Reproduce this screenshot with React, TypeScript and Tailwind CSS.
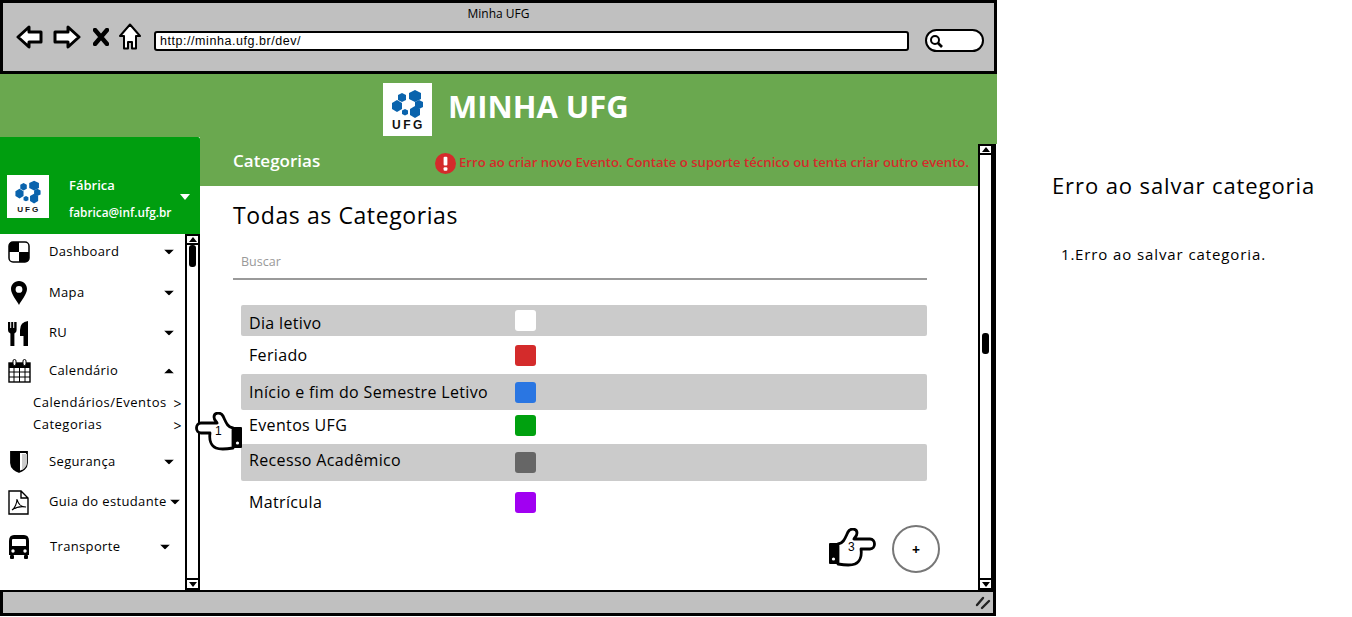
import type { ReactNode } from "react";

const FONT = "font-['Open_Sans','Noto_Sans',sans-serif]";

const CATEGORIES = [
  { name: "Dia letivo", color: "bg-white", gray: true, row: "h-[31px]", text: "pt-[8px]", swatch: "mt-[5px]" },
  { name: "Feriado", color: "bg-[#d42b2b]", gray: false, row: "h-[38px]", text: "pt-[9px]", swatch: "mt-[9px]" },
  { name: "Início e fim do Semestre Letivo", color: "bg-[#2a76e2]", gray: true, row: "h-[36px]", text: "pt-[8px]", swatch: "mt-[8px]" },
  { name: "Eventos UFG", color: "bg-[#00a10f]", gray: false, row: "h-[34px]", text: "pt-[5px]", swatch: "mt-[5px]" },
  { name: "Recesso Acadêmico", color: "bg-[#666666]", gray: true, row: "h-[37px]", text: "pt-[6px]", swatch: "mt-[8px]" },
  { name: "Matrícula", color: "bg-[#a100f2]", gray: false, row: "h-[43px]", text: "pt-[11px]", swatch: "mt-[11px]" },
];

function Logo({ className, textSize }: { className: string; textSize: number }) {
  return (
    <div className={`bg-white shrink-0 ${className}`}>
      <svg viewBox="0 0 49 53" className="w-full h-full">
        <g fill="#0a63ad">
          <polygon points="32,7 38,10 38,16 32,19 26,16 26,10" />
          <polygon points="19,10 23,12 23,17 19,19 15,17 15,12" />
          <polygon points="14,17 19,20 19,26 14,29 9,26 9,20" />
          <polygon points="36,17 40,19 40,24 36,26 32,24 32,19" />
          <polygon points="22,26 25,27.5 25,31 22,32.5 19,31 19,27.5" />
          <polygon points="32,23 37,26 37,32 32,35 27,32 27,26" />
        </g>
        <text x="25.5" y="46" textAnchor="middle" fontSize={textSize} fontWeight="700" letterSpacing="2.5" fill="#111" fontFamily="Liberation Sans, sans-serif">
          UFG
        </text>
      </svg>
    </div>
  );
}

function Caret({ up = false }: { up?: boolean }) {
  return (
    <svg viewBox="0 0 10 5" className="w-[10px] h-[5px] shrink-0">
      <polygon points={up ? "5,0 10,5 0,5" : "0,0 10,0 5,5"} fill="#000" />
    </svg>
  );
}

function Scrollbar({ className, thumb }: { className: string; thumb: string }) {
  return (
    <div className={`relative flex flex-col justify-between border-x-2 border-black bg-white shrink-0 ${className}`}>
      <div className="h-[11px] border-b-2 border-black border-t-2 flex items-center justify-center">
        <div className="w-0 h-0 border-x-[4px] border-x-transparent border-b-[5px] border-b-black" />
      </div>
      <div className={`absolute rounded-[3px] bg-black w-[7px] left-[2px] ${thumb}`} />
      <div className="h-[12px] border-y-2 border-black flex items-center justify-center">
        <div className="w-0 h-0 border-x-[4px] border-x-transparent border-t-[5px] border-t-black" />
      </div>
    </div>
  );
}

function Hand({ className, label, flip }: { className: string; label: string; flip?: boolean }) {
  return (
    <div className={`absolute z-20 w-[48px] h-[40px] ${className}`}>
      <svg viewBox="0 0 48 40" className={`w-full h-full ${flip ? "-scale-x-100" : ""}`}>
        <path
          d="M10 16 C16 15 17 10 20 4 C22 0 29 0 29 5 C29 8 27 9 26 11 L42 11 C48 11 48 21 42 21 L33 21 C34 28 32 34 27 36 C22 38 16 37 10 36 Z"
          fill="#fff"
          stroke="#000"
          strokeWidth="2.8"
          strokeLinejoin="round"
        />
        <rect x="1" y="15" width="10" height="21" rx="1" fill="#000" />
        <circle cx="5.5" cy="31" r="1.6" fill="#fff" />
      </svg>
      <span className="absolute top-[12px] left-[20px] text-[12px] leading-[14px] text-black font-['Liberation_Sans',sans-serif]">
        {label}
      </span>
    </div>
  );
}

const navIcons: Record<string, ReactNode> = {
  dashboard: (
    <svg viewBox="0 0 22 22" className="w-[22px] h-[22px]">
      <rect x="1" y="1" width="20" height="20" rx="4" fill="#fff" stroke="#000" strokeWidth="1.5" />
      <path d="M5 1 H11 V11 H1 V5 Q1 1 5 1 Z M11 11 H21 V17 Q21 21 17 21 H11 Z" fill="#000" />
    </svg>
  ),
  map: (
    <svg viewBox="0 0 16 24" className="w-[16px] h-[24px] ml-[3px]">
      <path d="M8 0 C3 0 0 4 0 8 C0 13 6 20 8 24 C10 20 16 13 16 8 C16 4 13 0 8 0 Z M8 5 A3.4 3.4 0 1 1 8 11.8 A3.4 3.4 0 1 1 8 5 Z" fill="#000" fillRule="evenodd" />
    </svg>
  ),
  food: (
    <svg viewBox="0 0 20 25" className="w-[20px] h-[25px]">
      <path d="M0 1 H2.2 V7 H3.2 V1 H5.2 V7 H6.2 V1 H8.6 V9 Q8.6 12 6.4 12.5 V25 H2.4 V12.5 Q0 12 0 9 Z" fill="#000" />
      <path d="M12 9 Q12 1 20 0 V25 H15.5 V15 H12 Z" fill="#000" />
    </svg>
  ),
  calendar: (
    <svg viewBox="0 0 23 24" className="w-[23px] h-[24px]">
      <rect x="1" y="4" width="21" height="19" fill="#fff" stroke="#000" strokeWidth="1.4" />
      <rect x="1" y="4" width="21" height="5" fill="#000" />
      <rect x="5" y="0.5" width="3" height="6" rx="1.5" fill="#fff" stroke="#000" />
      <rect x="15" y="0.5" width="3" height="6" rx="1.5" fill="#fff" stroke="#000" />
      <path d="M1 13 H22 M1 18 H22 M6 9 V23 M11.5 9 V23 M17 9 V23" stroke="#000" strokeWidth="1" />
    </svg>
  ),
  shield: (
    <svg viewBox="0 0 18 22" className="w-[18px] h-[22px] ml-[2px]">
      <path d="M1 1 H17 V12 C17 17 12 20 9 21 C6 20 1 17 1 12 Z" fill="#fff" stroke="#000" strokeWidth="1.8" />
      <path d="M1 1 H10 V21 L9 21 C6 20 1 17 1 12 Z" fill="#000" />
      <path d="M12 3 H17 V12 C17 15 14 18 12 19 Z" fill="#ccc" />
    </svg>
  ),
  pdf: (
    <svg viewBox="0 0 21 25" className="w-[21px] h-[25px]">
      <path d="M1 1 H13 L20 8 V24 H1 Z M13 1 V8 H20" fill="#fff" stroke="#000" strokeWidth="1.4" />
      <path d="M4 20 C7 18 9 13 9 9 C10 14 13 17 18 17 C13 16 8 17 4 20 Z" fill="none" stroke="#000" strokeWidth="1.1" />
    </svg>
  ),
  bus: (
    <svg viewBox="0 0 22 24" className="w-[22px] h-[24px]">
      <path d="M6 0 H16 Q21 0 21 6 V20 H1 V6 Q1 0 6 0 Z" fill="#000" />
      <path d="M5 4 H17 Q18 4 18 5 V11 H4 V5 Q4 4 5 4 Z" fill="#fff" />
      <circle cx="5" cy="16" r="1.7" fill="#fff" />
      <circle cx="17" cy="16" r="1.7" fill="#fff" />
      <rect x="2" y="20" width="4" height="4" rx="1" fill="#000" />
      <rect x="16" y="20" width="4" height="4" rx="1" fill="#000" />
    </svg>
  ),
};

const NAV = [
  { label: "Dashboard", icon: "dashboard", row: "h-[36px]", caret: "left-[164px]", textX: "" },
  { label: "Mapa", icon: "map", row: "h-[46px]", caret: "left-[164px]", textX: "" },
  { label: "RU", icon: "food", row: "h-[34px]", caret: "left-[164px]", textX: "" },
  { label: "Calendário", icon: "calendar", row: "h-[41px]", caret: "left-[164px]", textX: "", up: true },
];

const NAV_BOTTOM = [
  { label: "Segurança", icon: "shield", row: "h-[52px]", caret: "left-[164px]", textX: "" },
  { label: "Guia do estudante", icon: "pdf", row: "h-[28px]", caret: "left-[170px]", textX: "" },
  { label: "Transporte", icon: "bus", row: "h-[62px]", caret: "left-[160px]", textX: "ml-[1px]" },
];

function NavRow({ item }: { item: { label: string; icon: string; row: string; caret: string; textX: string; up?: boolean } }) {
  return (
    <div className={`relative flex items-center ${item.row}`}>
      <div className="w-[49px] pl-[8px] flex items-center shrink-0">{navIcons[item.icon]}</div>
      <span className={`text-[13px] text-black whitespace-nowrap tracking-[0.35px] ${item.textX}`}>{item.label}</span>
      <div className={`absolute top-1/2 -translate-y-1/2 ${item.caret}`}>
        <Caret up={item.up} />
      </div>
    </div>
  );
}

function BrowserChrome() {
  return (
    <div className="h-[71px] bg-[#c0c0c0] border-b-[3px] border-black relative">
      <div className="text-center text-[12px] leading-[14px] pt-[4px] text-black">Minha UFG</div>
      <div className="flex items-center mt-[2px] pl-[13px] pr-[8px] h-[30px]">
        <svg viewBox="0 0 27 24" className="w-[27px] h-[24px] shrink-0 -mt-[2px]">
          <path d="M13 2 L2 12 L13 22 V17 H25 V7 H13 Z" fill="#fff" stroke="#000" strokeWidth="3" strokeLinejoin="round" />
        </svg>
        <svg viewBox="0 0 28 24" className="w-[28px] h-[24px] ml-[10px] shrink-0 -mt-[2px]">
          <path d="M15 2 L26 12 L15 22 V17 H2 V7 H15 Z" fill="#fff" stroke="#000" strokeWidth="3" strokeLinejoin="round" />
        </svg>
        <svg viewBox="0 0 16 18" className="w-[16px] h-[18px] ml-[12px] shrink-0 -mt-[3px]">
          <path d="M2 2 L14 16 M14 2 L2 16" stroke="#000" strokeWidth="4.4" strokeLinecap="round" />
        </svg>
        <svg viewBox="0 0 22 27" className="w-[22px] h-[27px] ml-[10px] shrink-0 -mt-[3px]">
          <path d="M11 1.5 L21 13 H17 V25.5 H13 V19 H9 V25.5 H5 V13 H1 Z" fill="#fff" stroke="#000" strokeWidth="2" strokeLinejoin="round" />
        </svg>
        <div className="ml-[13px] mt-[6px] w-[755px] h-[20px] border-2 border-black rounded-[3px] bg-white flex items-center pl-[4px] text-[12.5px] text-black font-['Liberation_Sans',sans-serif] tracking-[0.55px]">
          http://minha.ufg.br/dev/
        </div>
        <div className="ml-[16px] mt-[5px] w-[59px] h-[23px] border-2 border-black rounded-full bg-white flex items-center pl-[2px]">
          <svg viewBox="0 0 14 14" className="w-[14px] h-[14px]">
            <circle cx="6" cy="6" r="4" fill="#fff" stroke="#000" strokeWidth="2" />
            <path d="M9 9 L13 13" stroke="#000" strokeWidth="2.6" />
          </svg>
        </div>
      </div>
    </div>
  );
}

function Sidebar() {
  return (
    <aside className="w-[200px] -mt-[7px] shrink-0 flex flex-col relative z-10 bg-white">
      <div className="h-[97px] bg-[#009e0f] rounded-tr-[2px] relative flex items-end pb-[16px] pl-[7px]">
        <Logo className="w-[42px] h-[43px]" textSize={10} />
        <div className="ml-[20px] text-white font-semibold mb-[-3px]">
          <div className="text-[13px] leading-[18px]">Fábrica</div>
          <div className="text-[11.8px] leading-[18px] mt-[9px]">fabrica@inf.ufg.br</div>
        </div>
        <div className="absolute left-[180px] top-[57px] w-0 h-0 border-x-[5.5px] border-x-transparent border-t-[6px] border-t-white" />
      </div>
      <div className="flex flex-1 min-h-0">
        <div className="w-[185px] shrink-0">
          {NAV.map((item) => (
            <NavRow key={item.label} item={item} />
          ))}
          <div className="h-[22px] mt-[1px] flex items-center justify-between pl-[33px] pr-[3px] text-[13px] text-black tracking-[0.5px]">
            <span>Calendários/Eventos</span>
            <span className="text-[14px]">&gt;</span>
          </div>
          <div className="h-[22px] flex items-center justify-between pl-[33px] pr-[3px] text-[13px] text-black tracking-[0.5px]">
            <span>Categorias</span>
            <span className="text-[14px]">&gt;</span>
          </div>
          {NAV_BOTTOM.map((item) => (
            <NavRow key={item.label} item={item} />
          ))}
        </div>
        <Scrollbar className="w-[15px]" thumb="top-[11px] h-[22px]" />
      </div>
    </aside>
  );
}

function MainPanel() {
  return (
    <div className="flex-1 flex flex-col min-w-0">
      <div className="flex flex-1 min-h-0">
        <main className="flex-1 min-w-0 flex flex-col">
          <div className="h-[42px] bg-[#6aa84f] flex items-center pl-[33px] pr-[9px] pb-[4px] justify-between">
            <span className="text-white text-[17px] font-semibold -mt-[4px]">Categorias</span>
            <div className="flex items-center text-[#d42b2b] text-[13.15px] font-semibold whitespace-nowrap">
              <svg viewBox="0 0 20 20" className="w-[21px] h-[21px] mr-[3px]">
                <circle cx="10" cy="10" r="10" fill="#d42b2b" />
                <rect x="8.2" y="3.5" width="3.6" height="8.5" rx="1" fill="#fff" />
                <rect x="8.2" y="13.5" width="3.6" height="3.4" rx="1" fill="#fff" />
              </svg>
              Erro ao criar novo Evento. Contate o suporte técnico ou tenta criar outro evento.
            </div>
          </div>
          <div className="flex-1 bg-white pl-[33px] pt-[15px] pr-[51px] relative">
            <h1 className="text-[23px] leading-[28px] text-black tracking-[0.6px]">Todas as Categorias</h1>
            <div className="mt-[15px] border-b-2 border-[#9a9a9a] h-[36px] pl-[8px] pt-[8px] text-[12.5px] leading-[20px] text-[#999999]">
              Buscar
            </div>
            <div className="ml-[8px] mt-[25px]">
              {CATEGORIES.map((c) => (
                <div key={c.name} className={`flex rounded-[2px] pl-[8px] text-[16px] leading-[20px] text-black tracking-[0.35px] ${c.row} ${c.gray ? "bg-[#cbcbcb]" : ""}`}>
                  <span className={`w-[266px] whitespace-nowrap shrink-0 ${c.text}`}>{c.name}</span>
                  <div className={`w-[21px] h-[21px] rounded-[3px] ${c.color} ${c.swatch}`} />
                </div>
              ))}
            </div>
            <Hand className="left-[628px] top-[342px]" label="3" />
            <button className="absolute left-[692px] top-[339px] w-[48px] h-[48px] rounded-full border-2 border-[#777777] bg-white text-black text-[14px] font-bold flex items-center justify-center">
              +
            </button>
            <Hand className="-left-[5px] top-[226px]" label="1" flip />
          </div>
        </main>
        <Scrollbar className="w-[15px]" thumb="top-[189px] h-[21px]" />
      </div>
    </div>
  );
}

export default function App() {
  return (
    <div className={`w-[1352px] h-[617px] bg-white flex overflow-hidden ${FONT}`}>
      <div className="w-[997px] h-[616px] shrink-0 flex flex-col">
        <div className="border-[3px] border-b-0 border-black border-r-0 flex-none">
          <div className="border-r-[3px] border-black">
            <BrowserChrome />
          </div>
        </div>
        <div className="flex-1 flex flex-col min-h-0">
          <div className="h-[70px] bg-[#6aa84f] flex items-center shrink-0 pl-[383px]">
            <Logo className="w-[49px] h-[53px]" textSize={12} />
            <span className="ml-[16px] -mt-[5px] text-white text-[31px] font-bold leading-none">MINHA UFG</span>
          </div>
          <div className="flex-1 flex min-h-0 border-r-[3px] border-black mr-[1px]">
            <Sidebar />
            <MainPanel />
          </div>
          <div className="h-[26px] shrink-0 bg-[#c0c0c0] border-[3px] border-t-2 border-black mr-[1px] flex items-center justify-end pr-[2px]">
            <svg viewBox="0 0 16 14" className="w-[16px] h-[14px]">
              <path d="M2 9 L8 2 M7 12 L14 5" stroke="#222" strokeWidth="2.4" strokeLinecap="round" />
            </svg>
          </div>
        </div>
      </div>
      <div className="flex-1 pl-[55px] pt-[172px] text-black">
        <h2 className="text-[22px] leading-[26px] tracking-[0.9px] whitespace-nowrap">Erro ao salvar categoria</h2>
        <ol className="mt-[46px] pl-[9px] text-[15px] leading-[20px] tracking-[0.9px]">
          <li className="flex">
            <span className="w-[14px] shrink-0">1.</span>
            <span>Erro ao salvar categoria.</span>
          </li>
        </ol>
      </div>
    </div>
  );
}
